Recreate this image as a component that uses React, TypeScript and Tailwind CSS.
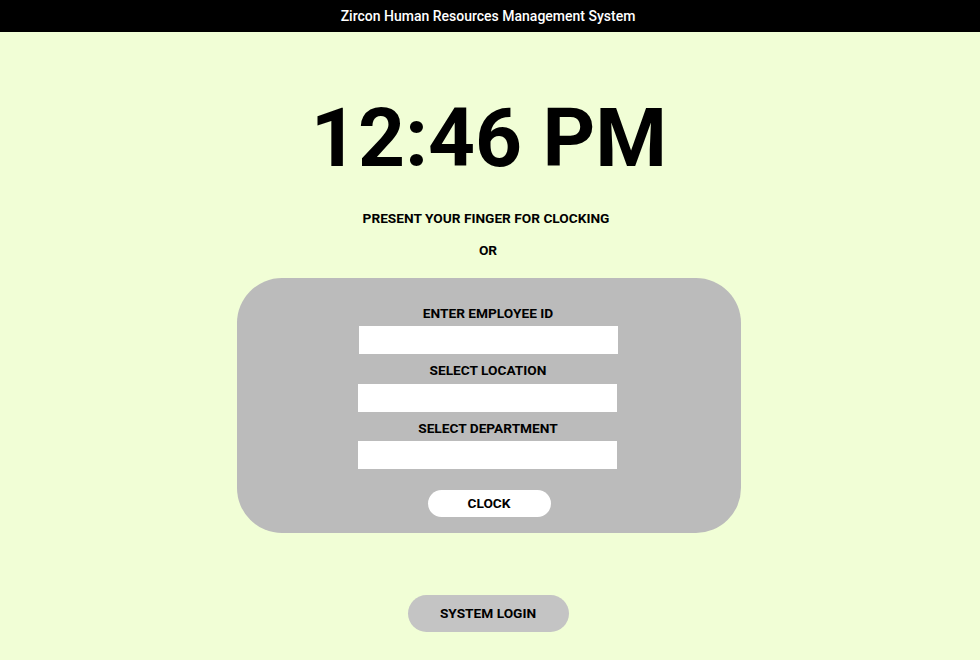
import { useState } from 'react';

export default function App() {
  const [employeeId, setEmployeeId] = useState('');
  const [location, setLocation] = useState('');
  const [department, setDepartment] = useState('');

  return (
    <div className="min-h-[660px] w-full bg-[#f1fed6] font-['Roboto',sans-serif] text-black flex flex-col items-center">
      <header className="w-full h-8 bg-black flex items-center justify-center">
        <h1 className="text-white text-[14px] font-medium -translate-x-[2px]">Zircon Human Resources Management System</h1>
      </header>

      <div className="mt-[65px] text-[82px] leading-[82px] font-bold -translate-x-[1px]">12:46 PM</div>

      <p className="mt-[31px] text-[13.7px] leading-4 font-bold -translate-x-[4px]">PRESENT YOUR FINGER FOR CLOCKING</p>
      <p className="mt-[16px] text-[13.7px] leading-4 font-bold -translate-x-[2px]">OR</p>

      <div className="mt-[20px] -translate-x-[1px] w-[504px] bg-[#bbbbbb] rounded-[45px] pt-[27px] pb-[16px] flex flex-col items-center">
        <label className="text-[13.7px] leading-4 font-bold -translate-x-[1px]">ENTER EMPLOYEE ID</label>
        <input
          value={employeeId}
          onChange={(e) => setEmployeeId(e.target.value)}
          className="mt-[5px] -translate-x-[1px] w-[259px] h-[28px] bg-white outline-none px-2 text-sm"
        />
        <label className="mt-[8px] text-[13.7px] leading-4 font-bold -translate-x-[1px]">SELECT LOCATION</label>
        <input
          value={location}
          onChange={(e) => setLocation(e.target.value)}
          className="mt-[6px] -translate-x-[2px] w-[259px] h-[28px] bg-white outline-none px-2 text-sm"
        />
        <label className="mt-[8px] text-[13.7px] leading-4 font-bold -translate-x-[1px]">SELECT DEPARTMENT</label>
        <input
          value={department}
          onChange={(e) => setDepartment(e.target.value)}
          className="mt-[5px] -translate-x-[2px] w-[259px] h-[28px] bg-white outline-none px-2 text-sm"
        />
        <button className="mt-[21px] w-[123px] h-[27px] bg-white rounded-full text-[13.7px] font-bold">CLOCK</button>
      </div>

      <button className="mt-[62px] -translate-x-[2px] w-[161px] h-[37px] bg-[#c4c4c4] rounded-full text-[13.7px] font-bold">SYSTEM LOGIN</button>
    </div>
  );
}
